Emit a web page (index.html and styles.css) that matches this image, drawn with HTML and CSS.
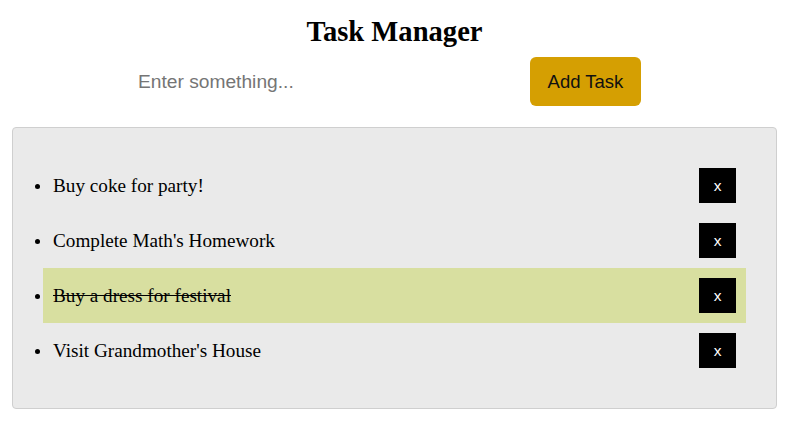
FILE: index.html
```html
<!DOCTYPE html>
<html>
<head>
<meta charset="utf-8">
<link rel="stylesheet" href="styles.css">
</head>
<body>
<h1 class="title">Task Manager</h1>
<form class="task-form">
  <input class="task-input" type="text" placeholder="Enter something...">
  <button class="add-btn" type="button">Add Task</button>
</form>
<div class="task-box">
  <ul class="task-list">
    <li class="task"><button class="del-btn" type="button">x</button><span class="task-text">Buy coke for party!</span></li>
    <li class="task"><button class="del-btn" type="button">x</button><span class="task-text">Complete Math's Homework</span></li>
    <li class="task done"><button class="del-btn" type="button">x</button><span class="task-text">Buy a dress for festival</span></li>
    <li class="task"><button class="del-btn" type="button">x</button><span class="task-text">Visit Grandmother's House</span></li>
  </ul>
</div>
</body>
</html>
```
FILE: styles.css
```css
html, body {
  margin: 0;
  padding: 0;
  background: #ffffff;
}
body {
  font-family: "Liberation Serif", "Times New Roman", serif;
  color: #000;
  padding: 0 11px 0 12px;
}
.title {
  font-size: 28.6px;
  font-weight: bold;
  text-align: center;
  margin: 16px 0 9px;
  line-height: 32px;
}
.task-form {
  display: flex;
  align-items: center;
  margin: 0 0 21px 116px;
}
.task-input {
  width: 402px;
  height: 49px;
  box-sizing: border-box;
  border: none;
  outline: none;
  background: transparent;
  padding: 0 10px;
  font-family: "Liberation Sans", Arial, sans-serif;
  font-size: 19.2px;
  color: #000;
}
.task-input::placeholder {
  color: #757575;
}
.add-btn {
  width: 111px;
  height: 49px;
  border: none;
  border-radius: 6px;
  background: #d59f02;
  color: #111;
  font-family: "Liberation Sans", Arial, sans-serif;
  font-size: 18.5px;
  padding: 0;
}
.task-box {
  background: #eaeaea;
  border: 1px solid #cfcfcf;
  border-radius: 4px;
  padding: 30px;
}
.task-list {
  margin: 0;
  padding: 0;
  list-style: none;
}
.task {
  position: relative;
  padding: 10px;
  height: 55px;
  line-height: 35px;
  box-sizing: border-box;
  font-size: 19.2px;
}
.task::before {
  content: "";
  position: absolute;
  left: -8px;
  top: 26px;
  width: 5px;
  height: 5px;
  border-radius: 50%;
  background: #000;
}
.task.done {
  background: #d8dfa0;
}
.task.done .task-text {
  text-decoration: line-through;
}
.del-btn {
  float: right;
  width: 37px;
  height: 35px;
  border: none;
  background: #000;
  color: #fff;
  font-family: "Liberation Sans", Arial, sans-serif;
  font-size: 15.5px;
  line-height: 35px;
  padding: 0;
}
```
